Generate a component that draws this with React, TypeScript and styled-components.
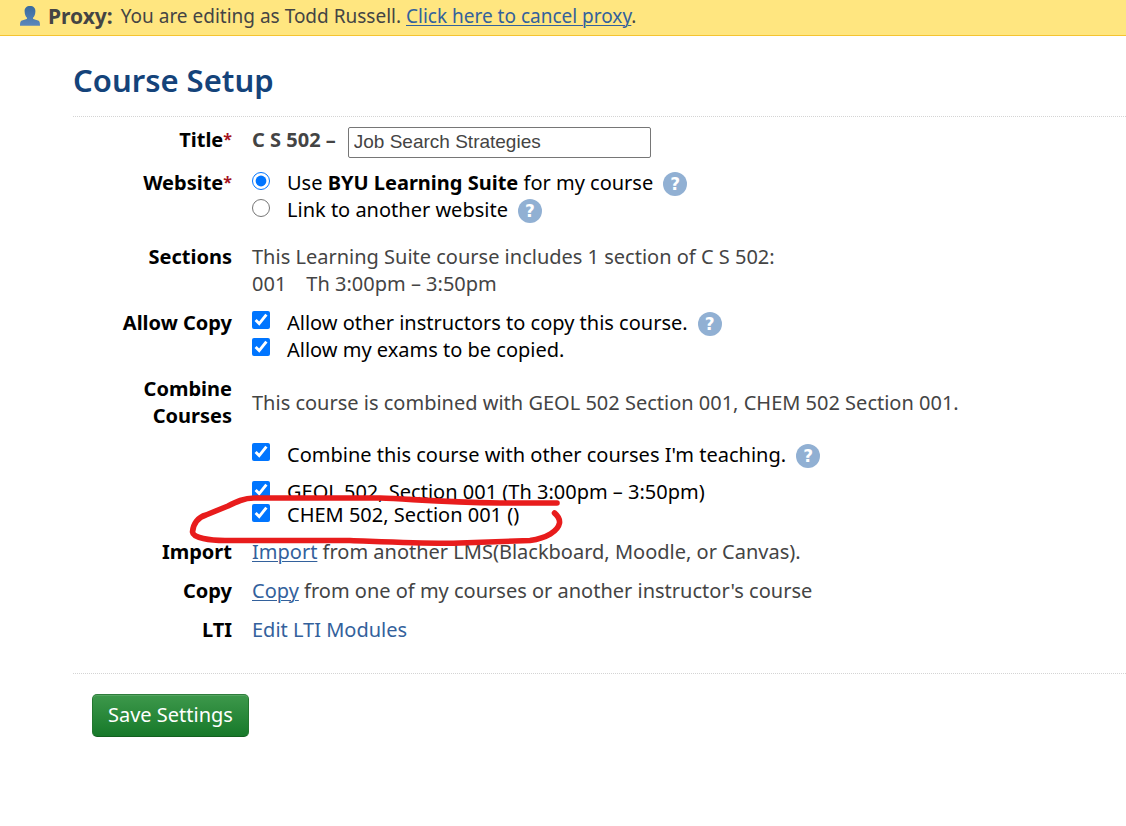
import React, { useState } from "react";
import styled, { createGlobalStyle } from "styled-components";

const GlobalStyle = createGlobalStyle`
  *, *::before, *::after { box-sizing: border-box; }
  body {
    margin: 0;
    background: #fff;
    color: #444;
    font-family: "Noto Sans", "Open Sans", sans-serif;
    font-size: 20px;
    line-height: 27px;
  }
`;

const ProxyBar = styled.div`
  display: flex;
  align-items: center;
  height: 36px;
  padding: 0 20px 3px;
  background: #ffe680;
  border-bottom: 1px solid #f5c431;
  font-size: 19px;
`;

const UserIcon = styled.svg`
  width: 20px;
  height: 20px;
  margin-right: 8px;
`;

const ProxyLabel = styled.strong`
  margin-right: 8px;
  font-size: 21px;
`;

const TextLink = styled.a<{ $plain?: boolean }>`
  color: #33619c;
  text-decoration: ${(p) => (p.$plain ? "none" : "underline")};
  text-decoration-thickness: 1px;
  text-underline-offset: 2px;
`;

const Main = styled.main`
  padding: 24px 0 40px 73px;
`;

const Heading = styled.h1`
  margin: 0;
  padding-bottom: 16px;
  border-bottom: 1px dotted #d4d4d4;
  color: #14437a;
  font-size: 31px;
  font-weight: 600;
  line-height: 40px;
`;

const Fields = styled.div`
  display: grid;
  gap: 12px;
  padding: 9px 20px 30px 0;
  border-bottom: 1px dotted #d4d4d4;
`;

const Row = styled.div<{ $center?: boolean; $roomy?: boolean }>`
  display: grid;
  grid-template-columns: 159px 1fr;
  column-gap: 20px;
  align-items: ${(p) => (p.$center ? "center" : "start")};
  padding-bottom: ${(p) => (p.$roomy ? 8 : 0)}px;
`;

const RowLabel = styled.label`
  padding-left: 40px;
  color: #000;
  font-weight: 700;
  text-align: right;
`;

const Required = styled.span`
  color: #a5121f;
  font-size: 16px;
  line-height: 16px;
  vertical-align: 2px;
`;

const Field = styled.div`
  grid-column: 2;
`;

const TitleField = styled(Field)`
  display: flex;
  gap: 12px;
  height: 31px;
  font-weight: 700;
`;

const TitleInput = styled.input`
  width: 303px;
  height: 31px;
  margin-top: 1px;
  padding: 0 5px 2px;
  border: 1px solid #767676;
  border-radius: 2px;
  color: #444;
  font-family: "Liberation Sans", Arial, sans-serif;
  font-size: 19px;
`;

const Option = styled.div<{ $tight?: boolean }>`
  display: flex;
  align-items: flex-start;
  line-height: ${(p) => (p.$tight ? 23 : 27)}px;
  color: #000;
`;

const Tick = styled.input<{ $drop: number }>`
  flex: none;
  width: 18px;
  height: 18px;
  margin: ${(p) => p.$drop}px 17px 0 0;
  accent-color: #0075ff;
`;

const Help = styled.button`
  display: grid;
  place-items: center;
  width: 24px;
  height: 24px;
  margin: 3px 0 0 10px;
  padding: 0;
  border: 0;
  border-radius: 50%;
  background: #91b0d3;
  color: #fff;
  font: 700 17px/24px "DejaVu Sans", sans-serif;
`;

const SectionTimes = styled.div`
  display: flex;
  gap: 20px;
`;

const CourseList = styled(Field)`
  position: relative;
`;

const RedCircle = styled.svg`
  position: absolute;
  top: 12px;
  left: -67px;
  width: 380px;
  height: 56px;
  pointer-events: none;
`;

const Footer = styled.footer`
  padding: 20px 19px;
`;

const SaveButton = styled.button`
  height: 43px;
  padding: 0 15px 3px;
  border: 1px solid;
  border-color: #2f7d3c #23772f #12601f;
  border-radius: 5px;
  background: linear-gradient(#3d984b, #17792a);
  box-shadow: inset 0 1px 0 #55a562;
  color: #fff;
  font: inherit;
`;

interface ChoiceProps {
  id: string;
  type?: "checkbox" | "radio";
  on?: boolean;
  help?: boolean;
  tight?: boolean;
  children: React.ReactNode;
}

function Choice({ id, type = "checkbox", on = false, help, tight, children }: ChoiceProps) {
  const drop = type === "radio" ? 3 : tight ? 1 : 2;
  return (
    <Option $tight={tight}>
      <Tick id={id} type={type} $drop={drop} name={type === "radio" ? "website" : id} defaultChecked={on} />
      <label htmlFor={id}>{children}</label>
      {help && <Help type="button" aria-label="Help">?</Help>}
    </Option>
  );
}

export default function App() {
  const [title, setTitle] = useState("Job Search Strategies");
  return (
    <>
      <GlobalStyle />
      <ProxyBar>
        <UserIcon viewBox="0 0 20 20" aria-hidden="true">
          <defs>
            <linearGradient id="user" x1="0" y1="0" x2="0" y2="1">
              <stop offset="0" stopColor="#396a9e" />
              <stop offset="1" stopColor="#5b87bb" />
            </linearGradient>
          </defs>
          <path
            fill="url(#user)"
            d="M10 0C6.500 0 4.500 2 4.600 5.200c.1 3.200 1 5.300 2.400 6.600v1C6 13.600 3 14 1.300 14.800 .3 15.500 0 17.300 0 19.700h20c0-2.400-.3-4.200-1.300-4.900-1.700-.8-4.700-1.200-5.700-2v-1C14.400 10.500 15.300 8.400 15.400 5.200 15.500 2 13.500 0 10 0z"
          />
        </UserIcon>
        <ProxyLabel>Proxy:</ProxyLabel>
        <span>
          You are editing as Todd Russell. <TextLink href="#cancel">Click here to cancel proxy</TextLink>.
        </span>
      </ProxyBar>
      <Main>
        <Heading>Course Setup</Heading>
        <form onSubmit={(e) => e.preventDefault()}>
          <Fields>
            <Row>
              <RowLabel htmlFor="title">Title<Required>*</Required></RowLabel>
              <TitleField>
                <span>C S 502 –</span>
                <TitleInput id="title" value={title} onChange={(e) => setTitle(e.target.value)} />
              </TitleField>
            </Row>
            <Row $roomy>
              <RowLabel as="span">Website<Required>*</Required></RowLabel>
              <Field>
                <Choice id="suite" type="radio" on help>Use <b>BYU Learning Suite</b> for my course</Choice>
                <Choice id="other" type="radio" help>Link to another website</Choice>
              </Field>
            </Row>
            <Row>
              <RowLabel as="span">Sections</RowLabel>
              <Field>
                This Learning Suite course includes 1 section of C S 502:
                <SectionTimes>
                  <span>001</span>
                  <span>Th 3:00pm – 3:50pm</span>
                </SectionTimes>
              </Field>
            </Row>
            <Row>
              <RowLabel as="span">Allow Copy</RowLabel>
              <Field>
                <Choice id="copy-course" on help>Allow other instructors to copy this course.</Choice>
                <Choice id="copy-exams" on>Allow my exams to be copied.</Choice>
              </Field>
            </Row>
            <Row $center>
              <RowLabel as="span">Combine Courses</RowLabel>
              <Field>This course is combined with GEOL 502 Section 001, CHEM 502 Section 001.</Field>
            </Row>
            <Row>
              <Field>
                <Choice id="combine" on help>Combine this course with other courses I'm teaching.</Choice>
              </Field>
            </Row>
            <Row>
              <CourseList>
                <Choice id="geol" on tight>GEOL 502, Section 001 (Th 3:00pm – 3:50pm)</Choice>
                <Choice id="chem" on tight>CHEM 502, Section 001 ()</Choice>
                <RedCircle viewBox="185 492 380 56" aria-hidden="true">
                  <path
                    fill="none"
                    stroke="#e81c1c"
                    strokeWidth="5.600"
                    strokeLinecap="round"
                    strokeLinejoin="round"
                    d="M557 503H500C440 502 410 499 380 498H254C244 498 236 502 228 506L206 515C198 517 193 524 192.500 532C193 538 210 540.500 225 540.500H350C390 542 430 544 460 543L530 540.500C547 538 558 531 559.500 523C560 519 558 516 554.500 513"
                  />
                </RedCircle>
              </CourseList>
            </Row>
            <Row>
              <RowLabel as="span">Import</RowLabel>
              <Field><TextLink href="#import">Import</TextLink> from another LMS(Blackboard, Moodle, or Canvas).</Field>
            </Row>
            <Row>
              <RowLabel as="span">Copy</RowLabel>
              <Field><TextLink href="#copy">Copy</TextLink> from one of my courses or another instructor's course</Field>
            </Row>
            <Row>
              <RowLabel as="span">LTI</RowLabel>
              <Field><TextLink $plain href="#lti">Edit LTI Modules</TextLink></Field>
            </Row>
          </Fields>
          <Footer>
            <SaveButton type="submit">Save Settings</SaveButton>
          </Footer>
        </form>
      </Main>
    </>
  );
}
